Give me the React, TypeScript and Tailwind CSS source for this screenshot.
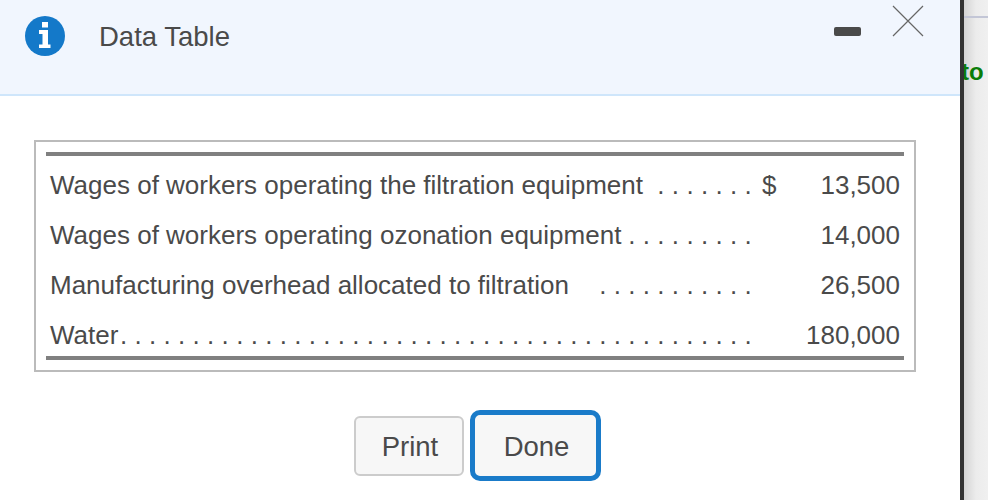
import React from "react";

const rows = [
  { label: "Wages of workers operating the filtration equipment", dots: 7, symbol: "$", amount: "13,500" },
  { label: "Wages of workers operating ozonation equipment", dots: 9, symbol: "", amount: "14,000" },
  { label: "Manufacturing overhead allocated to filtration", dots: 11, symbol: "", amount: "26,500" },
  { label: "Water", dots: 44, symbol: "", amount: "180,000" },
];

const App = () => {
  return (
    <div className="flex w-[988px] h-[500px] overflow-hidden bg-white font-['Liberation_Sans',Arial,sans-serif] text-[#4a4a4a]">
      <div className="w-[960px] shrink-0 flex flex-col">
        <header className="h-[96px] shrink-0 flex bg-[#f1f6fe] border-b-2 border-[#cfe6fb] pl-[25px] pr-[36px]">
          <svg className="w-10 h-10 mt-[16px] shrink-0" viewBox="0 0 40 40">
            <circle cx="20" cy="20" r="20" fill="#1479c9" />
            <path fill="#fff" d="M17 6h6v5.500h-6zM14 14h9v14.500h2.500V32H14v-3.500h3.500V18H14z" />
          </svg>
          <h1 className="ml-[34px] mt-[19px] text-[27.500px] leading-[36px] font-normal">Data Table</h1>
          <div className="ml-auto w-[27px] h-[9px] mt-[27px] mr-[-1px] rounded-[2px] bg-[#4a4a4a]" />
          <svg className="w-[32px] h-[32px] ml-[32px] mt-[5px] shrink-0" viewBox="0 0 32 32">
            <path d="M1 1l30 30M31 1L1 31" stroke="#666" strokeWidth="1.200" fill="none" />
          </svg>
        </header>

        <main className="flex-1 flex flex-col pt-[44px] pl-[34px]">
          <div className="w-[882px] h-[232px] border-2 border-[#bbbbbb] px-[10px] pt-[10px]">
            <div className="border-y-4 border-[#808080] h-[208px] px-[4px] py-[4px]">
              {rows.map((row) => (
                <div key={row.amount} className="flex items-center h-[50px] text-[26px] whitespace-nowrap">
                  <div className="w-[709px] flex justify-between">
                    <span>{row.label}</span>
                    <span className="tracking-[7.300px]">{".".repeat(row.dots)}</span>
                  </div>
                  <span className="w-[30px] ml-[3px]">{row.symbol}</span>
                  <span className="flex-1 text-right">{row.amount}</span>
                </div>
              ))}
            </div>
          </div>

          <div className="flex items-center gap-[6px] mt-[38px] ml-[320px] text-[27.500px]">
            <button className="w-[110px] h-[60px] pt-[2px] pl-[2px] rounded-[6px] border-2 border-[#cccccc] bg-[#f7f7f7]">Print</button>
            <button className="w-[131px] h-[71px] pt-[3px] pl-[2px] rounded-[10px] border-[5px] border-[#1a7bc9] bg-[#f7f7f7]">Done</button>
          </div>
        </main>
      </div>

      <div className="w-[4px] shrink-0 bg-[#333333]" />

      <aside className="flex-1 overflow-hidden bg-gradient-to-r from-[#d4d4d4] via-[#ececec] to-[#f0f0f0]">
        <div className="h-[2px] mt-[16px] bg-[#c3c6d6]" />
        <div className="mt-[40px] -ml-[3px] text-[24px] leading-[28px] font-bold text-[#0a7d0a]">to</div>
      </aside>
    </div>
  );
};

export default App;
